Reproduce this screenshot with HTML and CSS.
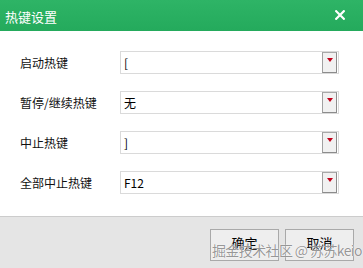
FILE: index.html
```html
<!DOCTYPE html>
<html lang="zh">
<head>
<meta charset="utf-8">
<title>热键设置</title>
<link rel="stylesheet" href="styles.css">
</head>
<body>
<div class="dialog">
  <div class="titlebar">
    <span class="title">热键设置</span>
    <span class="close" aria-label="关闭">
      <svg width="10" height="10" viewBox="0 0 10 10"><path d="M1.2 1.2 L8.8 8.8 M8.8 1.2 L1.2 8.8" stroke="#fff" stroke-width="2.2" stroke-linecap="square"/></svg>
    </span>
  </div>
  <div class="content">
    <div class="row">
      <span class="label">启动热键</span>
      <div class="combo"><span class="value">[</span><span class="drop"><i class="arrow"></i></span></div>
    </div>
    <div class="row">
      <span class="label">暂停/继续热键</span>
      <div class="combo"><span class="value">无</span><span class="drop"><i class="arrow"></i></span></div>
    </div>
    <div class="row">
      <span class="label">中止热键</span>
      <div class="combo"><span class="value">]</span><span class="drop"><i class="arrow"></i></span></div>
    </div>
    <div class="row">
      <span class="label">全部中止热键</span>
      <div class="combo"><span class="value">F12</span><span class="drop"><i class="arrow"></i></span></div>
    </div>
  </div>
  <div class="footer">
    <button class="btn">确定</button>
    <button class="btn">取消</button>
    <span class="watermark">掘金技术社区 @ 苏苏keio</span>
  </div>
</div>
</body>
</html>
```
FILE: styles.css
```css
html, body {
  margin: 0;
  padding: 0;
  background: #fff;
}
body {
  font-family: "Noto Sans CJK SC", "Liberation Sans", sans-serif;
  font-size: 12px;
  color: #111;
}
.dialog {
  width: 363px;
  height: 268px;
  display: flex;
  flex-direction: column;
  position: relative;
  overflow: hidden;
}
.titlebar {
  height: 31px;
  flex: none;
  background: linear-gradient(#2eb466, #24aa5c);
  display: flex;
  align-items: center;
  justify-content: space-between;
  padding: 0 18px 0 5px;
  color: #fff;
}
.title {
  font-size: 13px;
  line-height: 1;
  margin-top: 1px;
}
.close {
  display: flex;
  width: 10px;
  height: 10px;
  margin-top: -1px;
}
.content {
  flex: 1;
  padding: 20px 0 0 20px;
  display: flex;
  flex-direction: column;
  gap: 17px;
}
.row {
  display: flex;
  align-items: center;
  height: 23px;
}
.label {
  width: 100px;
  flex: none;
  font-size: 12px;
}
.combo {
  width: 219px;
  height: 23px;
  box-sizing: border-box;
  border: 1px solid #dadada;
  display: flex;
  align-items: center;
  justify-content: space-between;
  padding: 0 1px 0 3px;
  background: #fff;
}
.value {
  font-size: 12px;
  color: #000;
}
.drop {
  width: 15px;
  height: 21px;
  box-sizing: border-box;
  border: 1px solid #8c8c8c;
  border-top-color: #a8a8a8;
  border-left-color: #a0a0a0;
  background: #f1f1f1;
  display: flex;
  justify-content: center;
  padding-top: 5px;
}
.arrow {
  display: block;
  width: 0;
  height: 0;
  border-left: 3.5px solid transparent;
  border-right: 3.5px solid transparent;
  border-top: 4px solid #c2001a;
}
.footer {
  height: 52px;
  box-sizing: border-box;
  flex: none;
  background: #e5e5e5;
  border-top: 1px solid #cccccc;
  display: flex;
  justify-content: flex-end;
  align-items: flex-start;
  gap: 6px;
  padding: 12px 9px 0 0;
  position: relative;
}
.btn {
  width: 69px;
  height: 32px;
  border: 1px solid #a9a9a9;
  background: #eeeeee;
  font-family: "Noto Sans CJK SC", sans-serif;
  font-size: 13px;
  line-height: 1;
  color: #000;
  padding: 0 0 6px;
  margin: 0;
}
.watermark {
  position: absolute;
  right: 1px;
  top: 25px;
  font-size: 14px;
  line-height: 16px;
  letter-spacing: -0.6px;
  color: rgba(105, 105, 105, 0.7);
  text-shadow: 0 0 1px #fff, 0 0 1px #fff;
  white-space: nowrap;
  pointer-events: none;
}
```
